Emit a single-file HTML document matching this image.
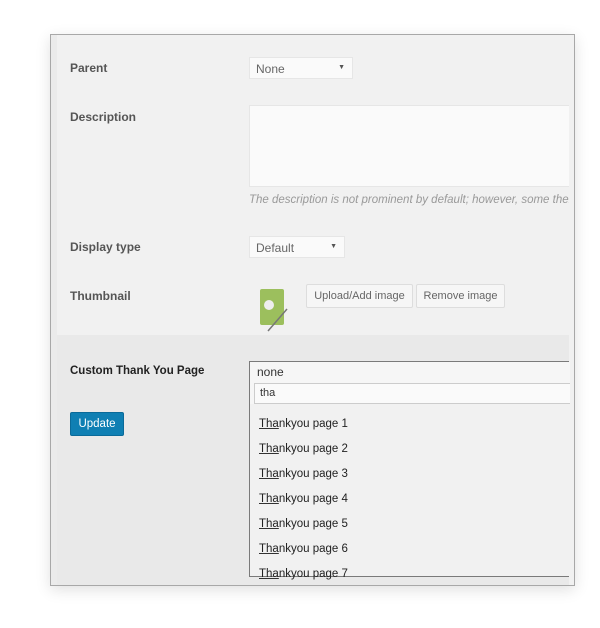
<!DOCTYPE html>
<html><head><style>
*{box-sizing:border-box;margin:0;padding:0}
body{width:600px;height:628px;background:#fff;position:relative;overflow:hidden;font-family:"Liberation Sans",sans-serif;}
.frame{position:absolute;left:50px;top:34px;width:525px;height:552px;border:1px solid #a8a8a8;background:#f1f1f1;box-shadow:0 4px 14px rgba(0,0,0,.12);overflow:hidden}
.a{position:absolute}
.lbl{font-size:12px;font-weight:bold;color:#555}
.sel{background:#fafafa;border:1px solid #e6e6e6;font-size:12px;color:#666;padding:4px 6px;}
.sel span{position:absolute;right:7px;top:6px;font-size:7px;color:#555}
.btn{border:1px solid #ddd;background:#f6f6f6;border-radius:2px;font-size:11px;color:#666;padding:5px 0;text-align:center;white-space:nowrap}
.item{position:absolute;left:9px;font-size:11.5px;color:#222}
.item u{text-decoration-color:#333}
</style></head><body>
<div class="frame">
<div class="a" style="left:6px;top:0;width:512px;height:300px;background:#f1f1f1"></div>
<div class="a" style="left:6px;top:300px;width:512px;height:250px;background:#e9e9e9"></div>
<div class="a" style="left:0;top:0;width:6px;height:550px;background:#ebebeb"></div>
<div class="a lbl" style="left:19px;top:26px">Parent</div>
<div class="a sel" style="left:198px;top:22px;width:104px;height:22px">None<span>▼</span></div>
<div class="a lbl" style="left:19px;top:75px">Description</div>
<div class="a" style="left:198px;top:70px;width:320px;height:82px;background:#fafafa;border:1px solid #e6e6e6;border-right:none"></div>
<div class="a" style="left:198px;top:159px;font-size:11.5px;font-style:italic;color:#999;white-space:nowrap;width:320px;overflow:hidden">The description is not prominent by default; however, some then</div>
<div class="a lbl" style="left:19px;top:205px">Display type</div>
<div class="a sel" style="left:198px;top:201px;width:96px;height:22px">Default<span>▼</span></div>
<div class="a lbl" style="left:19px;top:254px">Thumbnail</div>
<svg class="a" style="left:205px;top:252px" width="40" height="46"><rect x="4" y="2" width="24" height="36" rx="2" fill="#9cbf5d"/><circle cx="13" cy="18" r="5" fill="#eee"/><line x1="12" y1="44" x2="31" y2="22" stroke="#777" stroke-width="1.5"/></svg>
<div class="a btn" style="left:255px;top:249px;width:107px">Upload/Add image</div>
<div class="a btn" style="left:365px;top:249px;width:89px">Remove image</div>
<div class="a" style="left:19px;top:330px;font-size:11.5px;font-weight:bold;color:#222">Custom Thank You Page</div>
<div class="a" style="left:19px;top:377px;width:54px;height:24px;background:#0f7fb3;border:1px solid #0a6a99;border-radius:2px;color:#fff;font-size:11.5px;text-align:center;line-height:22px">Update</div>
<div class="a" style="left:198px;top:326px;width:320px;height:216px;border:1px solid #7a7a7a;border-right:none;background:#f1f1f1">
<div class="a" style="left:0;top:0;width:320px;height:42px;background:#f6f6f6"></div>
<div class="a" style="left:7px;top:3px;font-size:12px;color:#333">none</div>
<div class="a" style="left:4px;top:21px;width:316px;height:21px;border:1px solid #ccc;border-right:none;background:#fafafa;font-size:11px;color:#333;padding:3px 5px">tha</div>
<div class="item" style="top:56px"><u>Tha</u>nkyou page 1</div>
<div class="item" style="top:81px"><u>Tha</u>nkyou page 2</div>
<div class="item" style="top:106px"><u>Tha</u>nkyou page 3</div>
<div class="item" style="top:131px"><u>Tha</u>nkyou page 4</div>
<div class="item" style="top:156px"><u>Tha</u>nkyou page 5</div>
<div class="item" style="top:181px"><u>Tha</u>nkyou page 6</div>
<div class="item" style="top:206px"><u>Tha</u>nkyou page 7</div>
</div>
</div>
</body></html>
